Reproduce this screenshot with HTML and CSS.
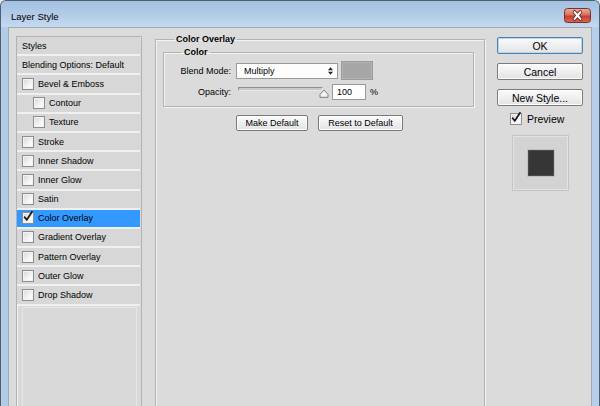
FILE: index.html
```html
<!DOCTYPE html>
<html>
<head>
<meta charset="utf-8">
<title>Layer Style</title>
<link rel="stylesheet" href="styles.css">
</head>
<body>
<div class="window">
  <div class="titlebar">
    <span class="title">Layer Style</span>
    <span class="close">
      <svg width="27" height="15" viewBox="0 0 27 15">
        <defs>
          <linearGradient id="cg" x1="0" y1="0" x2="0" y2="1">
            <stop offset="0" stop-color="#eab0a4"/>
            <stop offset="0.45" stop-color="#d9705f"/>
            <stop offset="0.55" stop-color="#c7402f"/>
            <stop offset="1" stop-color="#d86a52"/>
          </linearGradient>
        </defs>
        <rect x="0.5" y="0.5" width="26" height="14" rx="3" fill="url(#cg)" stroke="#7c3128"/>
        <path d="M10.5 4 L16.5 11 M16.5 4 L10.5 11" stroke="#5a1d16" stroke-width="3.6" stroke-linecap="round"/>
        <path d="M10.5 4 L16.5 11 M16.5 4 L10.5 11" stroke="#ffffff" stroke-width="2" stroke-linecap="round"/>
      </svg>
    </span>
  </div>
  <div class="frame">
    <div class="client">
      <div class="styles-list">
        <div class="row">Styles</div>
        <div class="row">Blending Options: Default</div>
        <div class="row"><span class="cb"></span>Bevel &amp; Emboss</div>
        <div class="row sub"><span class="cb"></span>Contour</div>
        <div class="row sub"><span class="cb"></span>Texture</div>
        <div class="row"><span class="cb"></span>Stroke</div>
        <div class="row"><span class="cb"></span>Inner Shadow</div>
        <div class="row"><span class="cb"></span>Inner Glow</div>
        <div class="row"><span class="cb"></span>Satin</div>
        <div class="row selected"><span class="cb"><svg class="check" width="12" height="13" viewBox="0 0 12 13"><path d="M2.2 6.6 L4.8 9.8 L10.4 1.2" fill="none" stroke="#1a1a1a" stroke-width="1.7"/></svg></span>Color Overlay</div>
        <div class="row"><span class="cb"></span>Gradient Overlay</div>
        <div class="row"><span class="cb"></span>Pattern Overlay</div>
        <div class="row"><span class="cb"></span>Outer Glow</div>
        <div class="row"><span class="cb"></span>Drop Shadow</div>
        <div class="list-fill"></div>
      </div>

      <fieldset class="panel">
        <legend>Color Overlay</legend>
        <fieldset class="group">
          <legend>Color</legend>
          <div class="field">
            <span class="label">Blend Mode:</span>
            <div class="select">
              <span>Multiply</span>
              <svg width="5" height="8" viewBox="0 0 5 8"><polygon points="0,3.2 2.5,0.2 5,3.2" fill="#222"/><polygon points="0,4.8 2.5,7.8 5,4.8" fill="#222"/></svg>
            </div>
            <div class="swatch"></div>
          </div>
          <div class="field">
            <span class="label">Opacity:</span>
            <div class="slider">
              <div class="track"></div>
              <svg class="thumb" width="10" height="9" viewBox="0 0 10 9"><path d="M1 8.3 L1 5.5 L5 1 L9 5.5 L9 8.3 Z" fill="#f4f4f4" stroke="#7d7d7d" stroke-width="1"/></svg>
            </div>
            <div class="input">100</div>
            <span class="pct">%</span>
          </div>
        </fieldset>
        <div class="btnrow">
          <div class="btn small w1">Make Default</div>
          <div class="btn small w2">Reset to Default</div>
        </div>
      </fieldset>

      <div class="side">
        <div class="btn big default">OK</div>
        <div class="btn big">Cancel</div>
        <div class="btn big">New Style...</div>
        <div class="preview-check">
          <span class="cb"><svg class="check" width="12" height="13" viewBox="0 0 12 13"><path d="M2.2 6.6 L4.8 9.8 L10.4 1.2" fill="none" stroke="#1a1a1a" stroke-width="1.7"/></svg></span>
          <span>Preview</span>
        </div>
        <div class="preview-box"><div class="preview-swatch"></div></div>
      </div>
    </div>
  </div>
</div>
</body>
</html>
```

FILE: styles.css
```css
* { box-sizing: border-box; }
html, body { margin: 0; padding: 0; }
body {
  width: 600px;
  height: 406px;
  overflow: hidden;
  background: #e8e8e8;
  font-family: "Liberation Sans", Arial, sans-serif;
  font-size: 9px;
  color: #000;
}
.window {
  width: 600px;
  height: 406px;
  display: flex;
  flex-direction: column;
  border: 1px solid #4d5f71;
  border-bottom: none;
  border-radius: 6px 6px 0 0;
  overflow: hidden;
  background: linear-gradient(to right, #b3cbe6, #c2d7ee 50%, #b7cfe9);
}
.titlebar {
  height: 26px;
  flex: none;
  display: flex;
  align-items: center;
  justify-content: space-between;
  padding: 4px 8px 0 10px;
  background: linear-gradient(#a4c1e2, #b3cce8 55%, #c5d9ef);
}
.title {
  font-family: "Liberation Sans", Arial, sans-serif;
  font-size: 9.5px;
  color: #000;
}
.close { display: flex; margin-top: -1px; }

.frame {
  flex: 1;
  min-height: 0;
  display: flex;
  padding: 0 7px;
}
.client {
  flex: 1;
  display: flex;
  align-items: stretch;
  background: #dbdbdb;
  border: 1px solid #9eaab6;
  border-bottom: none;
  padding: 8px 8px 0 7px;
  overflow: hidden;
}

/* left list */
.styles-list {
  width: 126px;
  flex: none;
  display: flex;
  flex-direction: column;
  border: 1px solid #b2b2b2;
  box-shadow: inset 1px 1px 0 #f2f2f2;
  background: #d9d9d9;
  margin-bottom: -10px;
}
.row {
  height: 19.2px;
  flex: none;
  display: flex;
  align-items: center;
  padding-left: 5px;
  margin-right: 1px;
  border-bottom: 2px solid #f0f0f0;
  background: #d7d7d7;
  white-space: nowrap;
}
.row.sub { padding-left: 16px; }
.row.selected { background: #3399ff; }
.cb {
  width: 12px;
  height: 12px;
  flex: none;
  position: relative;
  margin-right: 4px;
  border: 1px solid #8e8e8e;
  background: linear-gradient(135deg, #d8d8d8, #f9f9f9 70%);
  box-shadow: inset 0 0 0 1px #f3f3f3;
}
.check { position: absolute; left: -1px; top: -3px; }
.list-fill {
  flex: 1;
  margin: 1px 4px 0 5px;
  border: 1px solid #e6e6e6;
  border-bottom: none;
}

/* center panel */
.panel {
  width: 330px;
  flex: none;
  margin: -1px 0 -10px 13px;
  padding: 0;
  border: 1px solid #b3b3b3;
  box-shadow: inset 1px 1px 0 #f3f3f3, 1px 1px 0 #f3f3f3;
  min-width: 0;
}
.panel > legend {
  margin-left: 18px;
  padding: 0 2px;
  font-weight: bold;
  line-height: 9px;
}
.group {
  margin: 3px 10px 0 7px;
  padding: 3px 0 5px 0;
  border: 1px solid #b3b3b3;
  box-shadow: inset 1px 1px 0 #f3f3f3, 1px 1px 0 #f3f3f3;
  min-width: 0;
}
.group > legend {
  margin-left: 18px;
  padding: 0 2px;
  font-weight: bold;
  line-height: 11px;
}
.field {
  height: 19px;
  display: flex;
  align-items: center;
}
.field + .field { margin-top: 2px; }
.label {
  width: 67px;
  text-align: right;
  margin-right: 5px;
  flex: none;
}
.select {
  width: 102px;
  height: 16px;
  display: flex;
  align-items: center;
  justify-content: space-between;
  padding: 0 4px 0 7px;
  background: #fdfdfd;
  border: 1px solid #9a9a9a;
}
.swatch {
  width: 32px;
  height: 19px;
  margin-left: 3px;
  background: #a6a6a6;
  border: 1px solid #9c9c9c;
  box-shadow: inset 0 0 0 1px #b3b3b3;
}
.slider {
  width: 92px;
  height: 19px;
  margin-left: 2px;
  position: relative;
}
.track {
  position: absolute;
  left: 0;
  top: 5px;
  width: 85px;
  height: 4px;
  border: 1px solid #8f8f8f;
  border-bottom-color: #e8e8e8;
  border-right-color: #e8e8e8;
  background: #c9c9c9;
  border-radius: 1px;
}
.thumb { position: absolute; left: 81px; top: 7px; }
.input {
  width: 34px;
  height: 16px;
  margin-left: 2px;
  padding-left: 4px;
  display: flex;
  align-items: center;
  background: #fff;
  border: 1px solid #9a9a9a;
}
.pct { margin-left: 4px; }

.btnrow {
  display: flex;
  gap: 10px;
  margin: 8px 0 0 80px;
}
.btn {
  display: flex;
  align-items: center;
  justify-content: center;
  border: 1px solid #7a7a7a;
  border-radius: 2px;
  background: linear-gradient(#fbfbfb, #efefef 50%, #e3e3e3);
  box-shadow: inset 0 0 0 1px #fdfdfd;
  white-space: nowrap;
}
.btn.small { height: 16px; }
.w1 { width: 72px; }
.w2 { width: 85px; }

/* right side */
.side {
  width: 86px;
  flex: none;
  margin: 1px 0 0 12px;
  display: flex;
  flex-direction: column;
}
.btn.big {
  height: 17px;
  margin-bottom: 9px;
  font-size: 10.5px;
}
.btn.default {
  border-color: #4a7fae;
  box-shadow: inset 0 0 0 1px #b7d6f0;
}
.preview-check {
  display: flex;
  align-items: center;
  height: 12px;
  margin: -2px 0 0 13px;
  font-size: 10.5px;
}
.preview-check .cb { margin-right: 5px; }
.preview-box {
  width: 57px;
  height: 56px;
  margin: 10px 0 0 15px;
  display: flex;
  align-items: center;
  justify-content: center;
  background: #d3d3d3;
  border: 1px solid #c4c4c4;
  box-shadow: inset 0 0 0 1px #e3e3e3;
}
.preview-swatch {
  width: 26px;
  height: 26px;
  background: #363636;
  border: 1px solid #4a4a4a;
  box-shadow: 0 0 0 1px #c0c0c0;
}
```
